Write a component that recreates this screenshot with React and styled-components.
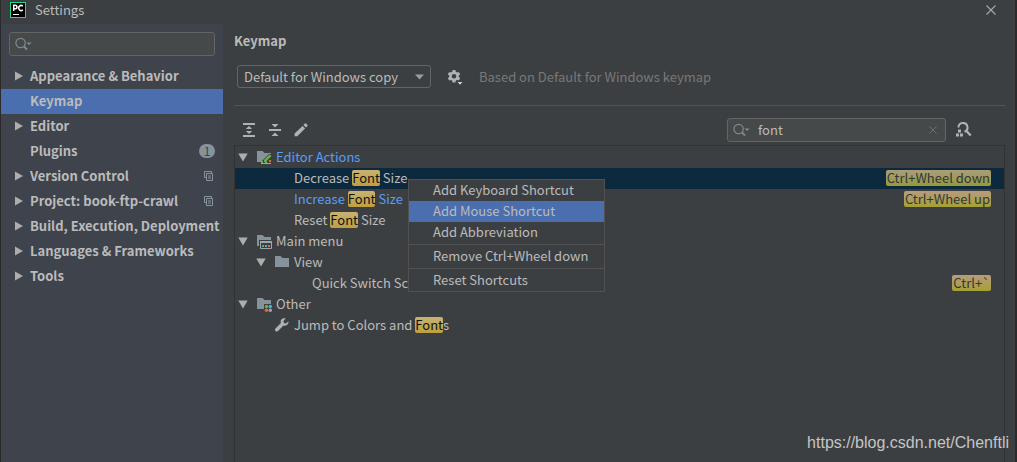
import React from 'react';
import styled, { createGlobalStyle, css } from 'styled-components';

const GlobalStyle = createGlobalStyle`
  * { box-sizing: border-box; }
  body { margin: 0; background: #3c3f41; }
  body, button, input, select {
    font-family: "Noto Sans CJK SC", "Noto Sans", "Liberation Sans", sans-serif;
    font-size: 13px;
    line-height: 18px;
    color: #bbbbbb;
  }
  button, input, select { border: 0; padding: 0; background: none; outline: 0; }
  svg { display: block; flex: none; }
`;

const Window = styled.div`
  position: relative;
  display: flex;
  flex-direction: column;
  min-height: 100vh;
  border-left: 1px solid #2b2b2b;
  border-right: 2px solid #2b2b2b;
  background: #3c3f41;
  overflow: hidden;
`;

const TitleBar = styled.header`
  display: flex;
  align-items: center;
  gap: 9px;
  height: 24px;
  padding: 0 16px 4px 9px;
`;

const Title = styled.span`
  flex: 1;
  line-height: 20px;
`;

const IconButton = styled.button`
  display: flex;
  align-items: center;
  justify-content: center;
  width: 16px;
  height: 16px;
`;

const Body = styled.div`
  display: flex;
  flex: 1;
`;

const Sidebar = styled.nav`
  display: flex;
  flex-direction: column;
  flex: none;
  width: 222px;
  padding-top: 8px;
  background: #3f434c;
`;

const SearchField = styled.label`
  display: flex;
  align-items: center;
  gap: 8px;
  height: 24px;
  padding: 0 4px 0 5px;
  border: 1px solid #646464;
  border-radius: 3px;
  background: #45494a;
  ${(p) => (p.$wide ? css`width: 219px;` : css`margin: 0 8px 8px;`)}
`;

const SearchInput = styled.input`
  flex: 1;
  min-width: 0;
  height: 20px;
`;

const NavItem = styled.a`
  display: flex;
  align-items: center;
  height: 25px;
  padding: 0 8px 2px 14px;
  font-weight: 700;
  white-space: nowrap;
  text-decoration: none;
  color: #bbbbbb;
  background: ${(p) => (p.$active ? '#4b6eaf' : 'transparent')};
`;

const NavArrow = styled.span`
  flex: none;
  width: 15px;
`;

const NavLabel = styled.span`
  flex: 1;
`;

const CountBadge = styled.span`
  width: 16px;
  height: 14px;
  border-radius: 7px;
  background: #87939a;
  color: #3f434c;
  font-size: 12px;
  font-weight: 400;
  line-height: 14px;
  text-align: center;
`;

const Main = styled.main`
  display: flex;
  flex-direction: column;
  flex: 1;
  min-width: 0;
  padding: 7px 10px 0 11px;
`;

const Heading = styled.h1`
  margin: 0 0 14px;
  font-size: 13px;
  font-weight: 700;
  line-height: 20px;
`;

const SchemeRow = styled.div`
  display: flex;
  align-items: center;
  padding: 0 0 17px 3px;
  border-bottom: 1px solid #515456;
`;

const SelectBox = styled.span`
  display: grid;
  align-items: center;
  width: 194px;
  height: 23px;
  margin-right: 16px;
  border: 1px solid #646464;
  border-radius: 3px;

  > * { grid-area: 1 / 1; }
  > svg { justify-self: end; margin-right: 6px; pointer-events: none; }
`;

const Select = styled.select`
  appearance: none;
  width: 100%;
  height: 21px;
  padding: 0 20px 0 6px;
`;

const Hint = styled.span`
  margin-left: 16px;
  color: #787878;
  white-space: nowrap;
`;

const Toolbar = styled.div`
  display: flex;
  align-items: center;
  gap: 10px;
  height: 39px;
  padding: 8px 33px 0 7px;
`;

const Spacer = styled.span`
  flex: 1;
`;

const Tree = styled.div`
  position: relative;
  flex: 1;
  border: 1px solid #323232;
  border-bottom: 0;
`;

const TreeRow = styled.div`
  display: flex;
  align-items: center;
  height: 21px;
  padding-left: ${(p) => 3 + p.$level * 18}px;
  padding-bottom: 1px;
  padding-right: 13px;
  color: ${(p) => (p.$changed ? '#589df6' : '#bbbbbb')};
  background: ${(p) => (p.$selected ? '#0d293e' : 'transparent')};

  &:first-child { margin-top: 1px; }
`;

const TreeLabel = styled.span`
  flex: 1;
  white-space: pre;
`;

const Slot = styled.span`
  flex: none;
  width: ${(p) => (p.$icon ? 20 : 18)}px;
`;

const Match = styled.mark`
  display: inline-block;
  height: 16px;
  border-radius: 2px;
  color: #111111;
  line-height: 16px;
  background: linear-gradient(#c8b274, #bf9f3c);
`;

const Shortcut = styled.kbd`
  height: 16px;
  padding: 0 1px;
  border-radius: 2px;
  font-family: inherit;
  line-height: 16px;
  color: #32373a;
  background: ${(p) =>
    p.$selected ? 'linear-gradient(#a99d7c, #959b38)' : 'linear-gradient(#b79c80, #a5a032)'};
`;

const Menu = styled.div`
  position: absolute;
  top: 33px;
  left: 173px;
  width: 197px;
  border: 1px solid #515151;
  background: #3c3f41;
`;

const MenuItem = styled.button`
  display: block;
  width: 100%;
  height: 21px;
  padding: 0 0 1px 24px;
  text-align: left;
  white-space: nowrap;
  background: ${(p) => (p.$active ? '#4b6eaf' : 'transparent')};
`;

const MenuLine = styled.hr`
  height: 1px;
  margin: 1px 0;
  border: 0;
  background: #515151;
`;

const Watermark = styled.span`
  position: absolute;
  right: 6px;
  bottom: 9px;
  font-family: "Liberation Sans", Arial, sans-serif;
  font-size: 16px;
  line-height: 20px;
  color: #c4c5c6;
`;

const AppLogo = () => (
  <svg width="16" height="16" viewBox="0 0 16 16" aria-hidden="true">
    <rect x="0.5" y="0.5" width="15" height="15" fill="#000" stroke="#21d789" />
    <g fill="none" stroke="#fff" strokeWidth="1.5">
      <path d="M3.7 9V3.2H5.2a1.7 1.7 0 0 1 0 3.5H4" />
      <path d="M12.8 4.1A2.5 2.5 0 1 0 12.8 7.9" />
    </g>
    <path d="M3 12h6v1H3z" fill="#fff" />
  </svg>
);

const CloseIcon = ({ size = 10, color = '#a8aaab' }) => (
  <svg width={size} height={size} viewBox="0 0 10 10" aria-hidden="true">
    <path d="M0.5 0.5L9.5 9.5M9.5 0.5L0.5 9.5" stroke={color} strokeWidth="1.1" />
  </svg>
);

const SearchIcon = () => (
  <svg width="17" height="14" viewBox="0 0 17 14" aria-hidden="true">
    <g fill="none" stroke="#7f8b91" strokeWidth="1.2">
      <circle cx="5.6" cy="6" r="4.7" />
      <path d="M9 9.5L12 12.5" strokeWidth="1.8" />
    </g>
    <path d="M11.5 5.5h5L14 8z" fill="#7f8b91" />
  </svg>
);

const RightArrow = () => (
  <svg width="8" height="10" viewBox="0 0 8 10" aria-hidden="true">
    <path d="M0 0.5L8 5L0 9.5z" fill="#adadad" />
  </svg>
);

const DownArrow = () => (
  <svg width="10" height="9" viewBox="0 0 10 9" aria-hidden="true">
    <path d="M0.3 0.5h9.4L5 8.5z" fill="#adadad" />
  </svg>
);

const ComboArrow = () => (
  <svg width="9" height="6" viewBox="0 0 9 6" aria-hidden="true">
    <path d="M0 0.5h9L4.5 5.5z" fill="#9a9da0" />
  </svg>
);

const CopyIcon = () => (
  <svg width="11" height="10" viewBox="0 0 11 10" aria-hidden="true">
    <path d="M2.5 6.5h-2v-6h7v2" fill="none" stroke="#87939a" />
    <path d="M2.5 2.5h6v7h-6zM4 5h3M4 7h3" fill="none" stroke="#87939a" />
  </svg>
);

const GearIcon = () => (
  <svg width="16" height="16" viewBox="0 0 16 16" aria-hidden="true">
    <path
      fillRule="evenodd"
      fill="#afb1b3"
      d="M5.6 1h2.8l.4 1.8 1.3.7 1.7-.6 1.4 2.5-1.4 1.2v1.4l1.4 1.2-1.4 2.4-1.7-.5-1.3.7-.4 1.8H5.6l-.4-1.8-1.3-.7-1.7.5L.8 9.200l1.400-1.200V6.600L.8 5.400l1.400-2.500 1.700.6 1.300-.7zM7 5a2.300 2.300 0 1 0 0 4.600A2.300 2.300 0 1 0 7 5z"
    />
    <path d="M9.500 11.500h6.500v1.500l-2.500 3h-1.500l-2.500-3z" fill="#3c3f41" />
    <path d="M10.500 13h5L13 15.700z" fill="#d0d2d3" />
  </svg>
);

const ExpandIcon = () => (
  <svg width="12" height="14" viewBox="0 0 12 14" fill="#afb1b3" aria-hidden="true">
    <path d="M0 0h12v2H0zM0 12h12v2H0zM6 3l3.200 3H2.800zM2.800 8h6.400L6 11z" />
  </svg>
);

const CollapseIcon = () => (
  <svg width="12" height="14" viewBox="0 0 12 14" fill="#afb1b3" aria-hidden="true">
    <path d="M0 6h12v2H0zM2.500 1h7L6 4.500zM6 9.500L9.500 13h-7z" />
  </svg>
);

const PencilIcon = () => (
  <svg width="14" height="14" viewBox="0 0 14 14" fill="#afb1b3" aria-hidden="true">
    <path d="M8.500 2.900l2.600 2.600L3.300 13.300H.6v-2.700zM9.400 2l1.300-1.300c.5-.5 1-.5 1.500 0l1.100 1.100c.5.5.5 1 0 1.500L12 4.600z" />
  </svg>
);

const FindShortcutIcon = () => (
  <svg width="16" height="15" viewBox="0 0 16 15" aria-hidden="true">
    <g fill="none" stroke="#afb1b3" strokeWidth="2">
      <path d="M2.500 5.500A4.500 4.500 0 1 1 8.500 9.700" />
      <path d="M10.500 9L14.700 13.500" strokeWidth="2.400" />
    </g>
    <path d="M2 7.500h3v3H2zM0 11.500h3v3H0zM4 11.500h3v3H4z" fill="#afb1b3" />
  </svg>
);

const FOLDER = 'M1 2h5.500l2 2H15v9H1z';

const FolderIcon = () => (
  <svg width="16" height="16" viewBox="0 0 16 16" aria-hidden="true">
    <path d={FOLDER} fill="#87939a" />
  </svg>
);

const EditorFolderIcon = () => (
  <svg width="16" height="16" viewBox="0 0 16 16" aria-hidden="true">
    <path d={FOLDER} fill="#87939a" />
    <path d="M4 14L13 5h3v11H4z" fill="#3c3f41" />
    <path d="M8 13v-2l5.500-5.500L15.500 7l-6 6z" fill="#62b543" />
    <path d="M5 12h2v2H5z" fill="#62b543" />
    <path d="M9 12h2v2H9z" fill="#62b543" />
    <path d="M13 11h2v2h-2z" fill="#f26522" />
    <path d="M5 14h10v1H5z" fill="#9aa7b0" />
  </svg>
);

const MenuFolderIcon = () => (
  <svg width="16" height="16" viewBox="0 0 16 16" aria-hidden="true">
    <path d={FOLDER} fill="#87939a" />
    <path d="M3 7h13v9H3z" fill="#3c3f41" />
    <path d="M4 8h12v2H4z" fill="#9aa7b0" />
    <path d="M4.500 9.500h11v6h-11z" fill="none" stroke="#9aa7b0" />
    <path d="M6 12h2v2H6z" fill="#62b543" />
    <path d="M9 12h2v2H9z" fill="#40b6e0" />
    <path d="M12 12h2v2h-2z" fill="#f26522" />
  </svg>
);

const OtherFolderIcon = () => (
  <svg width="16" height="16" viewBox="0 0 16 16" aria-hidden="true">
    <path d={FOLDER} fill="#87939a" />
    <path d="M8 8h8v8H8z" fill="#3c3f41" />
    <circle cx="10.500" cy="10.500" r="1.700" fill="#62b543" />
    <circle cx="14.300" cy="10.500" r="1.700" fill="#40b6e0" />
    <circle cx="10.500" cy="14.300" r="1.700" fill="#f26522" />
    <circle cx="14.300" cy="14.300" r="1.700" fill="#9aa7b0" />
  </svg>
);

const WrenchIcon = () => (
  <svg width="16" height="16" viewBox="0 0 16 16" aria-hidden="true">
    <path
      fill="#afb1b3"
      d="M14.400 4.200l-2.500 2.300-2-.6-.5-1.900 2.400-2.400C10.300.9 8.600 1.200 7.600 2.300c-1 1-1.200 2.500-.7 3.800L1.500 11.600c-.7.700-.7 1.700 0 2.400s1.800.7 2.500 0l5.500-5.400c1.300.4 2.700.1 3.700-.8 1-1 1.500-2.300 1.200-3.600z"
    />
  </svg>
);

const pages = [
  { label: 'Appearance & Behavior', group: true },
  { label: 'Keymap', active: true },
  { label: 'Editor', group: true },
  { label: 'Plugins', count: 1 },
  { label: 'Version Control', group: true, project: true },
  { label: 'Project: book-ftp-crawl', group: true, project: true },
  { label: 'Build, Execution, Deployment', group: true },
  { label: 'Languages & Frameworks', group: true },
  { label: 'Tools', group: true },
];

const actions = [
  { level: 0, open: true, icon: EditorFolderIcon, text: ['Editor Actions'], changed: true },
  { level: 1, text: ['Decrease ', 'Font', ' Size'], selected: true, keys: 'Ctrl+Wheel down' },
  { level: 1, text: ['Increase ', 'Font', ' Size'], changed: true, keys: 'Ctrl+Wheel up' },
  { level: 1, text: ['Reset ', 'Font', ' Size'] },
  { level: 0, open: true, icon: MenuFolderIcon, text: ['Main menu'] },
  { level: 1, open: true, icon: FolderIcon, text: ['View'] },
  { level: 2, text: ['Quick Switch Sch'], keys: 'Ctrl+`' },
  { level: 0, open: true, icon: OtherFolderIcon, text: ['Other'] },
  { level: 1, icon: WrenchIcon, text: ['Jump to Colors and ', 'Font', 's'] },
];

const ActionRow = ({ level, open, icon: Icon, text, changed, selected, keys }) => (
  <TreeRow
    role="treeitem"
    aria-level={level + 1}
    aria-selected={!!selected}
    $level={level}
    $changed={changed}
    $selected={selected}
  >
    <Slot>{open && <DownArrow />}</Slot>
    <Slot $icon>{Icon && <Icon />}</Slot>
    <TreeLabel>
      {text[0]}
      {text[1] && <Match>{text[1]}</Match>}
      {text[2]}
    </TreeLabel>
    {keys && <Shortcut $selected={selected}>{keys}</Shortcut>}
  </TreeRow>
);

export default function App() {
  return (
    <Window>
      <GlobalStyle />
      <TitleBar>
        <AppLogo />
        <Title>Settings</Title>
        <IconButton aria-label="Close"><CloseIcon /></IconButton>
      </TitleBar>
      <Body>
        <Sidebar>
          <SearchField>
            <SearchIcon />
            <SearchInput type="text" aria-label="Search settings" />
          </SearchField>
          {pages.map((page) => (
            <NavItem key={page.label} href="#" $active={page.active}>
              <NavArrow>{page.group && <RightArrow />}</NavArrow>
              <NavLabel>{page.label}</NavLabel>
              {page.count && <CountBadge>{page.count}</CountBadge>}
              {page.project && <CopyIcon />}
            </NavItem>
          ))}
        </Sidebar>
        <Main>
          <Heading>Keymap</Heading>
          <SchemeRow>
            <SelectBox>
              <Select aria-label="Keymap scheme">
                <option>Default for Windows copy</option>
              </Select>
              <ComboArrow />
            </SelectBox>
            <IconButton aria-label="Scheme actions"><GearIcon /></IconButton>
            <Hint>Based on Default for Windows keymap</Hint>
          </SchemeRow>
          <Toolbar>
            <IconButton aria-label="Expand all"><ExpandIcon /></IconButton>
            <IconButton aria-label="Collapse all"><CollapseIcon /></IconButton>
            <IconButton aria-label="Edit shortcut"><PencilIcon /></IconButton>
            <Spacer />
            <SearchField $wide>
              <SearchIcon />
              <SearchInput type="text" aria-label="Search actions" defaultValue="font" />
              <IconButton aria-label="Clear"><CloseIcon size={8} color="#70787b" /></IconButton>
            </SearchField>
            <IconButton aria-label="Find by shortcut"><FindShortcutIcon /></IconButton>
          </Toolbar>
          <Tree role="tree" aria-label="Actions">
            {actions.map((action) => (
              <ActionRow key={action.text.join('')} {...action} />
            ))}
            <Menu role="menu">
              <MenuItem role="menuitem">Add Keyboard Shortcut</MenuItem>
              <MenuItem role="menuitem" $active>Add Mouse Shortcut</MenuItem>
              <MenuItem role="menuitem">Add Abbreviation</MenuItem>
              <MenuLine />
              <MenuItem role="menuitem">Remove Ctrl+Wheel down</MenuItem>
              <MenuLine />
              <MenuItem role="menuitem">Reset Shortcuts</MenuItem>
            </Menu>
          </Tree>
        </Main>
      </Body>
      <Watermark>https://blog.csdn.net/Chenftli</Watermark>
    </Window>
  );
}
